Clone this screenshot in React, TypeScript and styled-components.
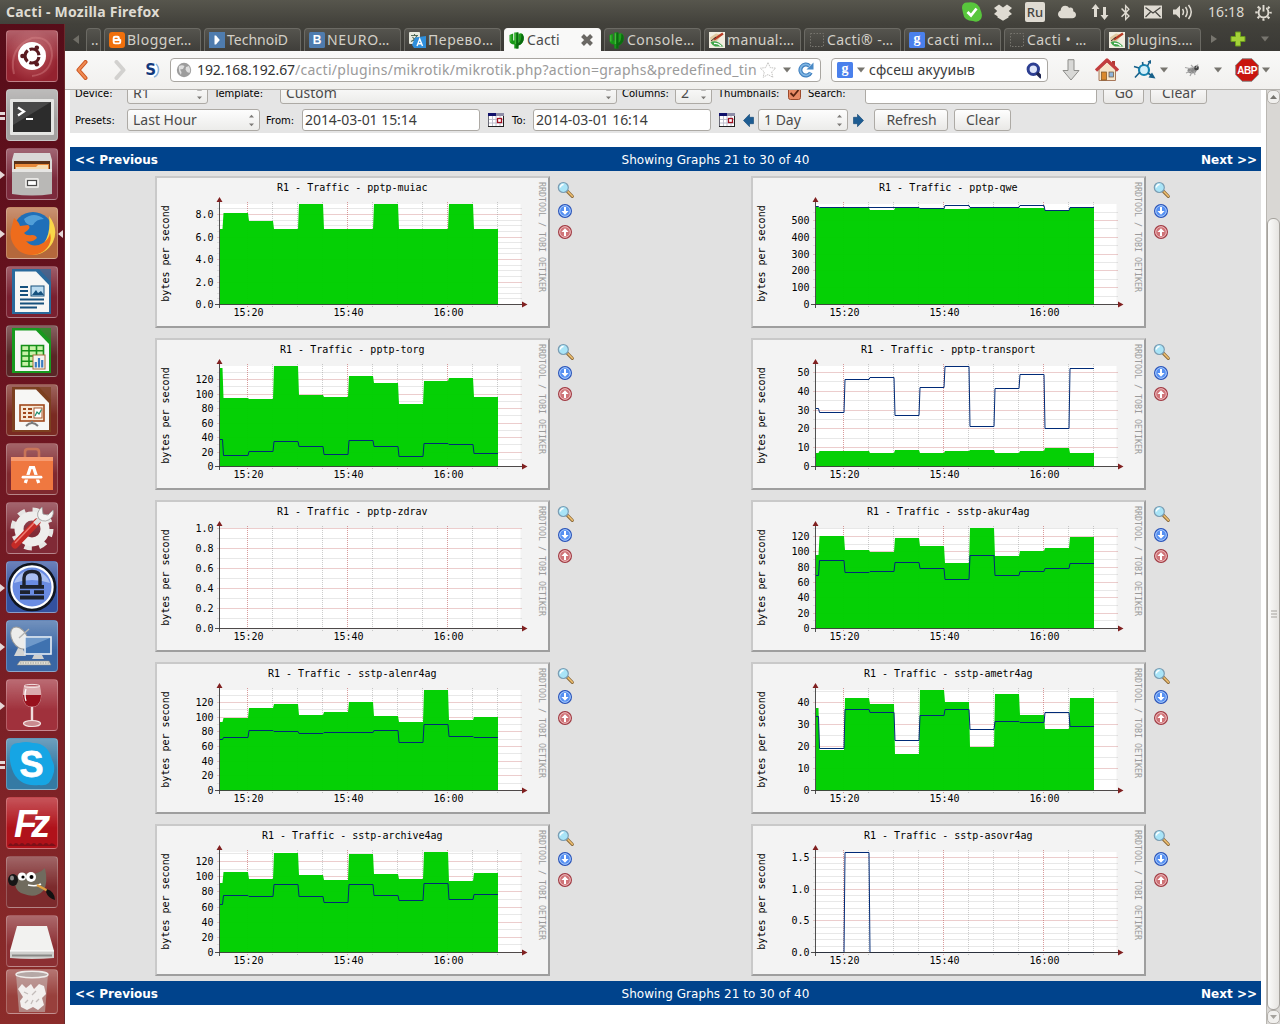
import React from "react";
import styled, { createGlobalStyle } from "styled-components";
import { FaCloud, FaBluetoothB } from "react-icons/fa";

const GlobalStyle = createGlobalStyle`
  * { box-sizing: border-box; }
  html, body { margin: 0; padding: 0; overflow: hidden; }
  body { background: #fff; font-family: "Noto Sans", sans-serif; color: #3c3c3c; }
  svg { display: block; flex: none; }
`;

const ui = `"Noto Sans", "Open Sans", sans-serif`;
const page = `"DejaVu Sans", sans-serif`;
const mono = `"DejaVu Sans Mono", monospace`;

/* ---------- desktop ---------- */

const Desktop = styled.div`
  width: 1280px;
  height: 1024px;
  display: flex;
  flex-direction: column;
  overflow: hidden;
`;

const TopPanel = styled.header`
  height: 24px;
  flex: none;
  display: flex;
  align-items: center;
  justify-content: space-between;
  padding: 0 8px 0 6px;
  background: linear-gradient(#57564d, #42413b);
  color: #dfdbd2;
`;

const WindowTitle = styled.span`
  font: bold 14px/24px ${ui};
  letter-spacing: 0.24px;
  white-space: nowrap;
`;

const Tray = styled.div`
  display: flex;
  align-items: center;
  height: 24px;
`;

const TrayItem = styled.span<{ w: number }>`
  width: ${(p) => p.w}px;
  flex: none;
  display: flex;
  align-items: center;
  justify-content: center;
`;

const Layout = styled.span`
  width: 20px;
  height: 20px;
  border-radius: 2px;
  background: #dfdbd2;
  color: #45443f;
  font: 500 13px/20px ${ui};
  text-align: center;
`;

const Clock = styled.span`
  width: 57px;
  padding-left: 10px;
  font: 14px/24px ${ui};
  letter-spacing: 0.1px;
`;

const Workspace = styled.div`
  flex: 1;
  display: flex;
  min-height: 0;
`;

/* ---------- launcher ---------- */

const Launcher = styled.nav`
  width: 65px;
  flex: none;
  padding: 6px 0 0 6px;
  display: flex;
  flex-direction: column;
  gap: 7px;
  background: linear-gradient(#570d19, #6a1420 35%, #7b2026 70%, #8b2c2a);
  border-right: 1px solid #6b2a2c;
`;

const Tile = styled.div<{ bg: string; short?: boolean }>`
  position: relative;
  width: 52px;
  height: ${(p) => (p.short ? 45 : 52)}px;
  margin-top: ${(p) => (p.short ? -5 : 0)}px;
  flex: none;
  border-radius: 4px;
  border: 1px solid rgba(255, 255, 255, 0.22);
  background: linear-gradient(rgba(255, 255, 255, 0.28), rgba(255, 255, 255, 0) 60%), ${(p) => p.bg};
  & > svg { margin: -1px; }
`;

const Pip = styled.i<{ kind: "one" | "two" | "active" }>`
  position: absolute;
  left: ${(p) => (p.kind === "active" ? "auto" : "-7px")};
  right: ${(p) => (p.kind === "active" ? "-6px" : "auto")};
  top: 22px;
  width: 5px;
  height: 8px;
  background: ${(p) => (p.kind === "two" ? "linear-gradient(#e6d8d8 3px, transparent 3px 5px, #e6d8d8 5px)" : "#e6d8d8")};
  clip-path: ${(p) =>
    p.kind === "one" ? "polygon(0 0, 100% 50%, 0 100%)" : p.kind === "active" ? "polygon(100% 0, 0 50%, 100% 100%)" : "none"};
`;

/* ---------- firefox ---------- */

const Browser = styled.main`
  flex: 1;
  min-width: 0;
  display: flex;
  flex-direction: column;
`;

const TabStrip = styled.div`
  height: 27px;
  flex: none;
  display: flex;
  align-items: flex-end;
  background: linear-gradient(#42413b, #3a3935);
`;

const TabArrow = styled.span<{ w: number }>`
  width: ${(p) => p.w}px;
  height: 24px;
  display: flex;
  align-items: center;
  justify-content: center;
`;

const Tab = styled.div<{ active?: boolean; w?: number }>`
  width: ${(p) => p.w ?? 97}px;
  height: 23px;
  margin-right: 3px;
  padding: 0 2px 0 4px;
  flex: none;
  display: flex;
  align-items: center;
  gap: 2px;
  border-radius: 4px 4px 0 0;
  border: 1px solid ${(p) => (p.active ? "#f7f6f5" : "#6b6a64")};
  border-bottom: 0;
  background: ${(p) => (p.active ? "#f9f9f8" : "linear-gradient(#55544e, #3f3e3a)")};
  color: ${(p) => (p.active ? "#4b4b4b" : "#d3d0c8")};
  font: 14px/22px ${ui};
  white-space: nowrap;
`;

const TabText = styled.span<{ ls?: number }>`
  flex: 1;
  letter-spacing: ${(p) => p.ls ?? 0}px;
`;

const Toolbar = styled.div`
  height: 39px;
  flex: none;
  display: flex;
  align-items: center;
  background: linear-gradient(#f9f9f8, #f1f0ee);
  border-bottom: 1px solid #b5b3af;
`;

const Field = styled.div<{ w: number; ml: number }>`
  width: ${(p) => p.w}px;
  height: 24px;
  margin-left: ${(p) => p.ml}px;
  padding: 0 6px 0 5px;
  flex: none;
  display: flex;
  align-items: center;
  border: 1px solid #a9a6a1;
  border-radius: 4px;
  background: #fff;
  font: 14px/22px ${ui};
  white-space: nowrap;
`;

const Url = styled.span`
  flex: 1;
  min-width: 0;
  margin-left: 5px;
  color: #9a9a9a;
  letter-spacing: 0.28px;
  b { font-weight: 400; color: #333; letter-spacing: -0.1px; }
`;

const Query = styled.span`
  flex: 1;
  margin-left: 4px;
  color: #3c3c3c;
  letter-spacing: 0.12px;
`;

const ToolIcon = styled.span<{ ml: number }>`
  margin-left: ${(p) => p.ml}px;
`;

const Viewport = styled.div`
  flex: 1;
  min-height: 0;
  display: flex;
  background: #fff;
  overflow: hidden;
`;

const Page = styled.div`
  width: 1196px;
  flex: none;
  padding-left: 5px;
  display: flex;
  flex-direction: column;
`;

/* ---------- filter form ---------- */

const Filter = styled.form`
  height: 43px;
  flex: none;
  margin-bottom: 14px;
  display: flex;
  flex-direction: column;
  justify-content: flex-end;
  overflow: hidden;
  background: #e5e5e5;
  padding-bottom: 2px;
`;

const FilterRow = styled.div`
  height: 22px;
  flex: none;
  display: flex;
  align-items: center;
  padding-left: 5px;
  & + & { margin-top: 5px; }
`;

const Label = styled.label<{ w: number }>`
  width: ${(p) => p.w}px;
  flex: none;
  padding-top: 1px;
  font: 10px/22px ${page};
  color: #000;
  white-space: nowrap;
`;

const Box = styled.div<{ w: number; mr?: number }>`
  width: ${(p) => p.w}px;
  height: 22px;
  flex: none;
  margin-right: ${(p) => p.mr ?? 6}px;
  padding: 0 4px 0 5px;
  display: flex;
  align-items: center;
  justify-content: space-between;
  border: 1px solid #adaaa5;
  border-radius: 3px;
  font: 14px/20px ${ui};
  color: #4b4b4b;
  white-space: nowrap;
`;

const Select = styled(Box)`
  background: linear-gradient(#fdfdfd, #ececea);
`;

const Input = styled(Box)`
  background: #fff;
  color: #3c3c3c;
  padding-left: 2px;
  letter-spacing: -0.05px;
`;

const Button = styled(Box)`
  justify-content: center;
  background: linear-gradient(#fefefe, #e9e8e6);
`;

const Glyph = styled.span<{ w: number }>`
  width: ${(p) => p.w}px;
  flex: none;
`;

/* ---------- graphs ---------- */

const NavBar = styled.div`
  height: 24px;
  flex: none;
  display: grid;
  grid-template-columns: 180px 1fr 81px;
  align-items: center;
  padding: 1px 4px 0 5px;
  background: #00438c;
  color: #fff;
  font: 12px/24px ${page};
  text-align: center;
  white-space: nowrap;
  span { letter-spacing: 0.06px; }
  b:first-child { text-align: left; }
  b:last-child { text-align: right; }
`;

const GraphGrid = styled.div`
  height: 810px;
  flex: none;
  display: grid;
  grid-template-columns: 596px 595px;
  grid-auto-rows: 162px;
  background: #e1e1e1;
`;

const Cell = styled.div`
  padding: 5px 0 0 85px;
  display: flex;
`;

const GraphLinks = styled.div`
  margin: 5px 0 0 7px;
  display: flex;
  flex-direction: column;
  gap: 3px;
`;

const ScrollBar = styled.div`
  width: 14px;
  margin-left: 5px;
  flex: none;
  display: flex;
  flex-direction: column;
  background: #d9d7d4;
  border-left: 1px solid #bab7b2;
`;

const ScrollButton = styled.div`
  height: 14px;
  flex: none;
  display: flex;
  align-items: center;
  justify-content: center;
  border: 1px solid #b4b1ac;
  border-radius: 5px;
  background: #f1f0ee;
`;

const ScrollThumb = styled.div`
  margin-top: 114px;
  height: 793px;
  display: flex;
  align-items: center;
  justify-content: center;
  border: 1px solid #a5a29d;
  border-radius: 6px;
  background: linear-gradient(90deg, #fbfbfa, #e6e4e1);
`;

type Graph = {
  name: string;
  max: number;
  step: number;
  minor: number;
  digits?: number;
  area?: number[];
  line?: number[];
};

const graphs: Graph[] = [
  {
    name: "pptp-muiac", max: 8.92, step: 2, minor: 0.5, digits: 1,
    area: [6.7, 8.12, 7.4, 6.7, 8.92, 6.7, 6.7, 8.92, 6.7, 6.7, 8.92, 6.7],
  },
  {
    name: "pptp-qwe", max: 597, step: 100, minor: 50,
    area: [578, 572, 572, 561, 572, 572, 566, 572, 572, 572, 560, 577],
    line: [586, 578, 578, 575, 576, 574, 592, 576, 576, 592, 560, 580],
  },
  {
    name: "pptp-torg", max: 138.4, step: 20, minor: 10,
    area: [135.6, 94.3, 93, 138.4, 99.3, 95.6, 124.6, 115, 86, 117.7, 121.8, 95.6],
    line: [37, 15, 20.7, 34.5, 27.6, 16.5, 36, 27.6, 13.8, 31.7, 30.3, 18],
  },
  {
    name: "pptp-transport", max: 53.3, step: 10, minor: 5,
    area: [7.2, 8, 8, 7.4, 9, 7, 8, 9, 7, 8, 9.6, 7],
    line: [30.8, 28.7, 46.3, 47.3, 27.1, 42, 53.2, 21.3, 41.5, 48.9, 20.2, 52.1],
  },
  { name: "pptp-zdrav", max: 1, step: 0.2, minor: 0.1, digits: 1 },
  {
    name: "sstp-akur4ag", max: 131, step: 20, minor: 10,
    area: [95.6, 120.4, 102.2, 99.6, 117.8, 107.4, 85.2, 130.9, 94.3, 100.9, 104.8, 119.1],
    line: [69.1, 88.7, 73, 74.3, 86, 78.3, 63.9, 95.2, 69.1, 74.3, 78.3, 84.8],
  },
  {
    name: "sstp-alenr4ag", max: 136.8, step: 20, minor: 10,
    area: [93.2, 98.6, 112.3, 117.7, 102.7, 106.8, 120.5, 101.4, 93.2, 136.8, 95.9, 100],
    line: [69.5, 72.3, 81.8, 80.5, 77.7, 79, 79, 81.8, 65.5, 90, 73.6, 72.3],
  },
  {
    name: "sstp-ametr4ag", max: 45.6, step: 10, minor: 5,
    area: [37.4, 18.3, 42, 39.2, 16.5, 45.6, 40.2, 19.7, 43.8, 34.2, 27.9, 42],
    line: [33.6, 19.1, 36.8, 35.5, 22.7, 34.1, 36.8, 27.7, 31.4, 30.9, 35.5, 29.1],
  },
  {
    name: "sstp-archive4ag", max: 132.3, step: 20, minor: 10,
    area: [91.4, 105.9, 96.7, 131, 102, 95.4, 129.7, 103.3, 96.7, 132.3, 94, 104.6],
    line: [63.3, 75.2, 73.8, 89.7, 73.8, 65.9, 89.7, 75.2, 68.6, 91, 69.9, 76.5],
  },
  {
    name: "sstp-asovr4ag", max: 1.58, step: 0.5, minor: 0.1, digits: 1,
    line: [0, 0, 1.57, 0, 0, 0, 0, 0, 0, 0, 0, 0],
  },
];

// x of every 5 minute boundary, the first slot is cut by the axis
const slots = [65, 67.5, 93, 118, 143, 168, 193, 218, 243, 268, 293, 318, 343];
const LEFT = 64.5;
const BASE = 128.5;
const PLOT = 100.3;

const RrdGraph = ({ name, max, step, minor, digits = 0, area, line }: Graph) => {
  const toY = (v: number) => BASE - (v / max) * PLOT;
  const trace = (vals: number[], snap: boolean) =>
    vals
      .map((v, i) => {
        const y = snap ? Math.floor(toY(v)) + 0.5 : Math.round(toY(v));
        return `${slots[i] + (i ? 1 : 0)},${y} ${slots[i + 1]},${y}`;
      })
      .join(" ");
  const rows = Array.from({ length: Math.floor(max / minor + 0.01) + 1 }, (_, i) => i * minor);
  const isMajor = (v: number) => Math.abs(v / step - Math.round(v / step)) < 0.01;

  return (
    <svg width="395" height="152" viewBox="0 0 395 152" fontFamily={mono} fontSize="10" fill="#000">
      <rect width="395" height="152" fill="#9e9e9e" />
      <path d="M0 0H395L393 2H2V150L0 152Z" fill="#c9c9c9" />
      <rect x="2" y="2" width="391" height="148" fill="#f3f3f3" />
      <rect x={LEFT} y="28" width="301" height="100.5" fill="#fff" />
      {rows.map((v) => (
        <line
          key={v}
          x1="62.5"
          x2="367"
          y1={Math.floor(toY(v)) + 0.5}
          y2={Math.floor(toY(v)) + 0.5}
          stroke={isMajor(v) ? "#c87070" : "#8f8f8f"}
          strokeOpacity={isMajor(v) ? 0.7 : 0.42}
          strokeDasharray="1 1"
        />
      ))}
      {slots.slice(2).map((x, i) => (
        <line
          key={x}
          x1={x - 0.5}
          x2={x - 0.5}
          y1="26"
          y2="131"
          stroke={i % 4 === 0 ? "#c87070" : "#8f8f8f"}
          strokeOpacity={i % 4 === 0 ? 0.7 : 0.45}
          strokeDasharray="1 1"
        />
      ))}
      {/* a trace of the grid stays visible through the area */}
      {area && <polygon points={`65,128.5 ${trace(area, false)} 343,128.5`} fill="#00cf00" fillOpacity="0.98" />}
      {line && <polyline points={trace(line, true)} fill="none" stroke="#002a77" strokeWidth="1" />}
      <path d="M60 128.5H369M64.5 25V132" stroke="#333" strokeWidth="1" fill="none" opacity="0.85" />
      <path d="M61.5 26L64.5 21L67.5 26ZM367 125.5V131.5L372.5 128.5Z" fill="#802020" />
      <text x="197.3" y="15" textAnchor="middle">
        {`R1 - Traffic - ${name}`}
      </text>
      {rows.filter(isMajor).map((v) => (
        <text key={v} x="58.5" y={toY(v) + 3.5} textAnchor="end">
          {v.toFixed(digits)}
        </text>
      ))}
      {["15:20", "15:40", "16:00"].map((t, i) => (
        <text key={t} x={93.5 + i * 100} y="140" textAnchor="middle">
          {t}
        </text>
      ))}
      <text transform="translate(14 77.5) rotate(-90)" textAnchor="middle">
        bytes per second
      </text>
      <text transform="translate(384 6) rotate(90)" fontSize="8.3" fill="#9a9a9a">
        RRDTOOL / TOBI OETIKER
      </text>
    </svg>
  );
};

const ZoomIcon = () => (
  <svg width="18" height="18" viewBox="0 0 18 18">
    <path d="M10.5 10.5L15.3 15.3" stroke="#8a6a3c" strokeWidth="3.2" strokeLinecap="round" />
    <path d="M11 10.8L15.4 15.2" stroke="#f0c070" strokeWidth="1.6" strokeLinecap="round" />
    <circle cx="6.3" cy="6.5" r="5" fill="#a9e4f7" stroke="#7a9cb2" strokeWidth="1.2" />
    <path d="M3.4 6.4A3 3 0 0 1 6.6 3.4" stroke="#fff" strokeWidth="1.5" fill="none" />
  </svg>
);

const ArrowIcon = ({ up }: { up?: boolean }) => (
  <svg width="16" height="18" viewBox="0 0 16 18">
    <circle cx="8" cy="9" r="6.4" fill={up ? "#cf7478" : "#5690f2"} stroke={up ? "#a03c44" : "#2c55b8"} strokeWidth="1.2" />
    <circle cx="8" cy="9" r="5.3" fill="none" stroke={up ? "#f0c4c6" : "#b4d2fc"} strokeWidth="0.9" />
    <path
      d="M7 5H9V9H11.6L8 12.8L4.4 9H7Z"
      fill="#fff"
      transform={up ? "rotate(180 8 9)" : undefined}
    />
  </svg>
);

const Spin = () => (
  <svg width="7" height="13" viewBox="0 0 7 13">
    <path d="M1 3.5L3.5 0.8L6 3.5ZM1 9.5L3.5 12.2L6 9.5Z" fill="#7d7b78" />
  </svg>
);

const Caret = ({ color = "#77756f" }: { color?: string }) => (
  <svg width="8" height="6" viewBox="0 0 8 6">
    <path d="M0 0.5H8L4 5.5Z" fill={color} />
  </svg>
);

const Calendar = () => (
  <svg width="16" height="14" viewBox="0 0 16 14">
    <rect x="0.5" y="0.5" width="15" height="13" fill="#fff" stroke="#6b6b78" />
    <rect x="0" y="0" width="8" height="3" fill="#10106a" />
    <rect x="8" y="0" width="8" height="3" fill="#8d8da6" />
    <path d="M4.5 3V13M8 3V13M12 3V13M1 6.5H15M1 10H15" stroke="#b9b9c8" strokeWidth="0.9" />
    <rect x="9.5" y="5.5" width="4" height="4" fill="#fff" stroke="#a01020" strokeWidth="1.3" />
    <path d="M0 13.5H16M15.5 3V14" stroke="#222" />
  </svg>
);

const Shift = ({ right }: { right?: boolean }) => (
  <svg width="11" height="13" viewBox="0 0 11 13">
    <path
      d="M0.5 6.5L6.5 0.3V3.3H10.5V9.7H6.5V12.7Z"
      fill="#1d5c92"
      stroke="#0f4474"
      strokeWidth="0.6"
      transform={right ? "rotate(180 5.5 6.5)" : undefined}
    />
  </svg>
);

/* ---------- favicons ---------- */

const Badge = ({ color, text, serif }: { color: string; text: string; serif?: boolean }) => (
  <svg width="16" height="16" viewBox="0 0 16 16">
    <rect width="16" height="16" rx="1.5" fill={color} />
    <text
      x="8"
      y={serif ? 11.3 : 12.3}
      textAnchor="middle"
      fontFamily={serif ? "Liberation Serif, serif" : "Liberation Sans, sans-serif"}
      fontWeight="bold"
      fontSize={serif ? 14 : 12}
      fill="#fff"
    >
      {text}
    </text>
  </svg>
);

const BloggerIcon = () => (
  <svg width="16" height="16" viewBox="0 0 16 16">
    <rect width="16" height="16" rx="3" fill="#f0700c" />
    <path d="M6 3.8H8.6A2.2 2.2 0 0 1 10.8 6V6.6Q11 7.3 12.2 7.4V10A2.3 2.3 0 0 1 9.9 12.3H6A2.3 2.3 0 0 1 3.7 10V6A2.3 2.3 0 0 1 6 3.8Z" fill="#fff" />
    <path d="M6.2 6.4H8M6.2 9.8H9.8" stroke="#f0700c" strokeWidth="1.4" strokeLinecap="round" />
  </svg>
);

const PlayIcon = () => (
  <svg width="16" height="16" viewBox="0 0 16 16">
    <rect width="16" height="16" fill="#4f7cae" />
    <path d="M5.5 3.5H7L10.8 8L7 12.5H5.5Z" fill="#fff" />
  </svg>
);

const TranslateIcon = () => (
  <svg width="17" height="17" viewBox="0 0 17 17">
    <rect width="11" height="12" rx="1" fill="#e8eadf" />
    <path d="M2 3.5H9M5.5 2V3.5M8 3.5Q6 8 2 9.5M3.5 5Q5.5 8 8.5 9.5" stroke="#506a58" strokeWidth="1.1" fill="none" />
    <path d="M6 5.5L17 4V16H5L3 13Z" fill="#2f8fdc" />
    <path d="M8 14L10.7 7L13.5 14M9 11.8H12.5" stroke="#fff" strokeWidth="1.4" fill="none" />
  </svg>
);

const CactusIcon = () => (
  <svg width="16" height="17" viewBox="0 0 16 17">
    <path d="M0.5 3L4.2 1.5V8.5H5.3V0.5H9.4V16.5H5.3V12.6Q1 12.4 0.5 9Z" fill="#169616" />
    <path d="M9.4 9.2V2.4Q11.5 0.4 13.8 2.2Q15.2 4 14.6 8Q13.4 12.3 9.4 13.6Z" fill="#1ea01a" />
    <path d="M12.3 1.8Q15.4 3 14.6 8Q13.4 12.3 9.4 13.6V11Q12.8 9 12.3 1.8ZM7.6 0.5H9.4V16.5H7.2Z" fill="#0b6a10" />
    <path d="M1.8 3.2V9.5M6.3 1.3V12" stroke="#56c848" strokeWidth="0.9" />
  </svg>
);

const ManualIcon = () => (
  <svg width="16" height="16" viewBox="0 0 16 16">
    <rect width="16" height="16" fill="#f1ede0" />
    <path d="M1 5.5L7 1.5L13 3L8 9L2 10Z" fill="#dfc9a0" />
    <path d="M5 7.5L14 1.5" stroke="#b83a24" strokeWidth="2.2" />
    <path d="M2 9L7 5" stroke="#3d3a34" strokeWidth="1" />
    <path d="M1.5 10.5Q7 6.5 14.5 14.5H6Q3 13 1.5 10.5Z" fill="#3fa648" />
    <path d="M5 11.5Q9 11 12 14" stroke="#fff" strokeWidth="1.3" fill="none" />
  </svg>
);

const BlankIcon = () => (
  <svg width="16" height="16" viewBox="0 0 16 16">
    <rect x="1.5" y="1.5" width="13" height="13" fill="none" stroke="#77756e" strokeDasharray="1.5 1.5" />
  </svg>
);

const google = <Badge color="#4a80ec" text="g" serif />;

const tabs: { icon: React.ReactNode; text: string; active?: boolean; ls?: number }[] = [
  { icon: <BloggerIcon />, text: "Blogger…", ls: 0.5 },
  { icon: <PlayIcon />, text: "TechnoiD", ls: 0 },
  { icon: <Badge color="#4f7cae" text="B" />, text: "NEURO…", ls: 0.7 },
  { icon: <TranslateIcon />, text: "Перево…", ls: 0.6 },
  { icon: <CactusIcon />, text: "Cacti", active: true, ls: 0.15 },
  { icon: <CactusIcon />, text: "Console…", ls: 0.5 },
  { icon: <ManualIcon />, text: "manual:…", ls: 0.35 },
  { icon: <BlankIcon />, text: "Cacti® -…", ls: 0.4 },
  { icon: google, text: "cacti mi…", ls: 0.55 },
  { icon: <BlankIcon />, text: "Cacti • …", ls: 0.45 },
  { icon: <ManualIcon />, text: "plugins.…", ls: 0.3 },
];

/* ---------- launcher icons, all on a 52px canvas ---------- */

const Sheet = ({ color, children }: { color: string; children: React.ReactNode }) => (
  <>
    <path d="M6 3H33L45 16V48H6Z" fill={color} />
    <path d="M9 5.5H30L43 19V46H9Z" fill="#f7f7f5" />
    <path d="M31 3L45 17V3Z" fill={color} opacity="0.7" />
    {children}
  </>
);

const launcherItems: { bg: string; pip?: "one" | "two"; active?: boolean; short?: boolean; art: React.ReactNode }[] = [
  {
    bg: "radial-gradient(#c05a60, #94222f 75%)",
    art: (
      <>
        <path d="M8 44Q2 18 26 8Q46 6 46 26Q44 44 26 46" stroke="#d98a8c" strokeWidth="2" fill="none" opacity="0.4" />
        <circle cx="26" cy="26" r="14" fill="#fff" />
        <circle cx="26" cy="26" r="7" fill="none" stroke="#5a1a20" strokeWidth="3.2" strokeDasharray="12.6 2.06" strokeDashoffset="-1" />
        <circle cx="16.5" cy="26" r="2.3" fill="#5a1a20" />
        <circle cx="30.8" cy="17.8" r="2.3" fill="#5a1a20" />
        <circle cx="30.8" cy="34.2" r="2.3" fill="#5a1a20" />
      </>
    ),
  },
  {
    bg: "#a3a1a0",
    pip: "two",
    art: (
      <>
        <rect x="4" y="10" width="44" height="36" rx="1" fill="#e5e5e3" />
        <rect x="7" y="13" width="38" height="30" fill="#2c2c2c" />
        <path d="M7 13H45L7 36Z" fill="#fff" opacity="0.13" />
        <path d="M12 18.5L18 22.5L12 26.5M20 30H27" stroke="#fff" strokeWidth="2.2" fill="none" />
      </>
    ),
  },
  {
    bg: "#7c2a3c",
    pip: "one",
    art: (
      <>
        <path d="M8 5H44L46 12V24H6V12Z" fill="#d9d8d6" />
        <rect x="8" y="13" width="36" height="10" fill="#5b3218" />
        <path d="M9 23V16H43V23" fill="#e88a3a" />
        <path d="M10 19H30L32 17H42V23H10Z" fill="#f6dcb0" />
        <path d="M6 21H46V46Q26 49 6 46Z" fill="#b9b8b6" />
        <path d="M6 21H46V24H6Z" fill="#e6e5e3" />
        <rect x="19" y="30" width="14" height="10" rx="1.5" fill="#e9e8e6" />
        <rect x="21.5" y="32.5" width="9" height="5" fill="#fff" stroke="#4a4a4a" strokeWidth="1.2" />
      </>
    ),
  },
  {
    bg: "#b4683c",
    pip: "one",
    active: true,
    art: (
      <>
        <circle cx="27" cy="25" r="20" fill="#1f6fb8" />
        <path d="M18 12Q28 4 38 12Q30 12 27 18Q20 19 18 12Z" fill="#66b4e6" opacity="0.7" />
        <path d="M43 9Q53 22 47 35Q40 48 25 48Q30 40 38 36Q45 26 43 9Z" fill="#f9d648" />
        <path d="M8 11Q13 15 14 19L22 18Q25 20 22 23L18 26Q20 29 26 28Q30 28 31 31Q26 36 20 34Q27 42 37 36Q43 32 44 26Q47 36 38 44Q26 52 13 44Q1 33 6 19Z" fill="#ee6c1c" />
      </>
    ),
  },
  {
    bg: "#7a2030",
    art: (
      <Sheet color="#2a6a9c">
        <path d="M14 21H22M14 25H22M14 29H22M14 33.5H38M14 37.5H38M14 41.5H31" stroke="#16517d" strokeWidth="1.8" />
        <rect x="25" y="20" width="13" height="10" fill="#bcdcf0" stroke="#16517d" />
        <path d="M26 29L30 24L32 27L35 25L38 29Z" fill="#16517d" />
      </Sheet>
    ),
  },
  {
    bg: "#5a2526",
    art: (
      <Sheet color="#189a1e">
        <path d="M15.5 20.5H37.5V41.5H15.5ZM15.5 25.8H37.5M15.5 31H37.5M15.5 36.3H37.5M23 20.5V41.5M30.5 20.5V41.5" stroke="#159018" strokeWidth="1.6" fill="#c8f2a8" />
        <rect x="27" y="30" width="12" height="14" fill="#f6f3ee" stroke="#a86b3a" />
        <path d="M29.8 42.5V37M33 42.5V33M36.2 42.5V35" stroke="#3c7cc0" strokeWidth="2.2" />
      </Sheet>
    ),
  },
  {
    bg: "#7a2a22",
    art: (
      <Sheet color="#7c4020">
        <rect x="14" y="21" width="24" height="16" fill="#f6e8d6" stroke="#a0481c" strokeWidth="1.6" />
        <path d="M17 25H20M17 29H20M17 33H20M22 25H26M22 29H26M22 33H26" stroke="#a0481c" strokeWidth="2" />
        <rect x="28" y="24" width="8" height="10" fill="#fff" stroke="#a0481c" strokeWidth="0.9" />
        <path d="M29 32L31 28L33 30L35.5 25.5" stroke="#1e8f6e" strokeWidth="1.2" fill="none" />
        <path d="M20 42Q26 36 32 42M26 37V40" stroke="#7a7a7a" strokeWidth="2" fill="none" />
      </Sheet>
    ),
  },
  {
    bg: "#80292f",
    art: (
      <>
        <path d="M19 16V9Q19 6 22 6H30Q33 6 33 9V16" stroke="#c87458" strokeWidth="2.6" fill="none" />
        <path d="M5 14H47V47H5Z" fill="#ef7840" />
        <path d="M5 14H47V18H5Z" fill="#f69b70" />
        <path d="M19.3 40L24.4 24.5H27.6L32.7 40" stroke="#fff" strokeWidth="3.2" fill="none" />
        <path d="M17 34.2H35" stroke="#ef7840" strokeWidth="4.6" />
        <path d="M17 34.2H35" stroke="#fff" strokeWidth="2.8" strokeLinecap="round" />
      </>
    ),
  },
  {
    bg: "#802a36",
    art: (
      <>
        <circle cx="26" cy="27" r="19" fill="none" stroke="#e6e6e4" strokeWidth="5" strokeDasharray="7.5 7.42" />
        <circle cx="26" cy="27" r="13" fill="none" stroke="#eeeeec" strokeWidth="9" />
        <path d="M9 43L31 20" stroke="#c52a26" strokeWidth="7" strokeLinecap="round" />
        <path d="M9 41L29 20" stroke="#ee7a70" strokeWidth="1.6" />
        <path d="M29 22L35 16" stroke="#dededc" strokeWidth="5" />
        <path d="M36 5Q29 11 33 17Q40 22 46 15Q48 12 47 8L42 13L37 12Z" fill="#f4f4f2" stroke="#9b9b99" strokeWidth="0.8" />
      </>
    ),
  },
  {
    bg: "#33519f",
    pip: "one",
    art: (
      <>
        <circle cx="26" cy="26" r="23" fill="#fff" stroke="#10151f" strokeWidth="2.6" />
        <circle cx="26" cy="26" r="19.5" fill="#6a8ce2" />
        <path d="M8 22A19 19 0 0 1 44 22Q26 16 8 22Z" fill="#c4d4f8" opacity="0.7" />
        <path d="M18 26V17Q18 10.5 26 10.5Q34 10.5 34 17V26" stroke="#1d222c" strokeWidth="3.4" fill="none" />
        <path d="M14 24H38V27.8H14ZM14 29.3H24V33H14ZM28 29.3H38V33H28ZM14 34.5H38V38.5H14Z" fill="#1d222c" />
      </>
    ),
  },
  {
    bg: "#3a66a4",
    pip: "one",
    art: (
      <>
        <path d="M12 28L8 36H20L16 27Z" fill="#d5d5d3" />
        <ellipse cx="13.5" cy="18" rx="7.5" ry="12" transform="rotate(-30 13.5 18)" fill="#ededeb" stroke="#9a9a98" />
        <path d="M13 18L23 9" stroke="#b5b5b3" strokeWidth="1.4" />
        <rect x="19" y="17" width="26" height="17" fill="#3f72b0" stroke="#e8eef6" strokeWidth="1.6" />
        <path d="M20 18H44L20 28Z" fill="#8fb4dc" opacity="0.6" />
        <path d="M28 35H36L38 39H26Z" fill="#d0d0ce" />
        <path d="M14 41H43L45 45H11Z" fill="#e5e3da" stroke="#8a8a84" strokeWidth="0.6" />
        <path d="M14 43H43" stroke="#9b9b92" strokeDasharray="1.5 1" />
      </>
    ),
  },
  {
    bg: "#a0313c",
    pip: "one",
    art: (
      <>
        <path d="M18 7H34Q38 24 29 28H23Q14 24 18 7Z" fill="#e9c8c8" opacity="0.75" />
        <path d="M17 16H35Q35 25 29 27.5H23Q17 25 17 16Z" fill="#98101c" />
        <ellipse cx="26" cy="7" rx="8" ry="1.6" fill="none" stroke="#f2dede" />
        <path d="M26 28V43" stroke="#f0dcdc" strokeWidth="2.4" />
        <ellipse cx="26" cy="44.5" rx="8.5" ry="3" fill="#c98a8e" stroke="#f2e4e4" strokeWidth="1.2" />
        <path d="M20 10Q18 16 20 22" stroke="#fff" strokeWidth="1.3" fill="none" />
      </>
    ),
  },
  {
    bg: "#357aa4",
    pip: "two",
    art: (
      <>
        <path d="M4 15Q4 4 13 5Q20 3 27 5Q42 5 46 22Q50 29 47 37Q44 49 33 47Q12 49 6 31Q3 22 4 15Z" fill="#16a5e4" />
        <text x="25.5" y="38.5" textAnchor="middle" fontFamily="Liberation Sans, sans-serif" fontWeight="bold" fontSize="36" fill="#fff" stroke="#fff" strokeWidth="0.8">S</text>
      </>
    ),
  },
  {
    bg: "#b0121a",
    art: (
      <>
        <path d="M2 49Q4 44 7 48Q10 44 13 48Q16 44 19 48Q22 44 25 48Q28 44 31 48Q34 44 37 48Q40 44 43 48Q46 44 50 49" fill="#7c1018" />
        <text x="8" y="40" fontFamily="Liberation Sans, sans-serif" fontStyle="italic" fontWeight="bold" fontSize="38" letterSpacing="-6" fill="#fff">Fz</text>
      </>
    ),
  },
  {
    bg: "#7c2a2c",
    art: (
      <>
        <path d="M11 19Q18 16 22 18Q32 19 39 12Q42 26 38 34Q30 43 18 38Q10 36 9 28Z" fill="#706b5e" />
        <circle cx="16" cy="20.5" r="4" fill="#fff" />
        <circle cx="25" cy="21" r="5" fill="#fff" />
        <circle cx="17" cy="21" r="1.6" />
        <circle cx="25.5" cy="21" r="2" />
        <ellipse cx="7" cy="24" rx="5" ry="6" fill="#161616" />
        <ellipse cx="6" cy="22" rx="2" ry="2.5" fill="#8a8a88" />
        <path d="M22 29Q30 31 35 28" stroke="#fff" strokeWidth="1.6" fill="none" />
        <path d="M31 29L42 35" stroke="#e0a040" strokeWidth="2.4" />
        <path d="M41 33Q49 36 49 44Q42 42 40 36Z" fill="#111" />
      </>
    ),
  },
  {
    bg: "#8c2f33",
    art: (
      <>
        <path d="M11 11H41L48 36H4Z" fill="#f2f2f0" />
        <path d="M4 36H48V43Q26 45 4 43Z" fill="#cfcfcd" />
        <path d="M4 36H48" stroke="#fff" />
        <path d="M6 40.5H46" stroke="#8a8a88" strokeWidth="2" />
      </>
    ),
  },
  {
    bg: "#98403c",
    short: true,
    art: (
      <>
        <path d="M10 5H42L39 43H13Z" fill="#c9c0be" opacity="0.55" />
        <ellipse cx="26" cy="5.5" rx="16" ry="3.2" fill="#b5a8a6" stroke="#efecea" strokeWidth="1.4" />
        <path d="M12 20L16 15L20 19L25 15L28 20L33 15L38 17L40 25L36 29L38 36L32 41L27 38L21 41L15 38L14 32L17 28Z" fill="#f2efee" />
        <path d="M18 23L22 25M30 22L26 26M22 31L19 34M30 33L33 30M25 35L27 31" stroke="#c3bcba" strokeWidth="1.3" fill="none" />
      </>
    ),
  },
];

const Nav = () => (
  <NavBar>
    <b>&lt;&lt; Previous</b>
    <span>Showing Graphs 21 to 30 of 40</span>
    <b>Next &gt;&gt;</b>
  </NavBar>
);

const PanelTray = () => (
  <Tray>
    <TrayItem w={24}>
      <svg width="22" height="22" viewBox="0 0 22 22">
        <path d="M1 7Q1 1 7 1.5Q17 0 19.5 9Q22 14 20 18Q17 22 12 20Q3 20 2 12Z" fill="#58c63c" />
        <path d="M6.5 11L10 14.5L15.5 7.5" stroke="#fff" strokeWidth="2.8" fill="none" />
      </svg>
    </TrayItem>
    <TrayItem w={38}>
      <svg width="18" height="17" viewBox="0 0 18 17">
        <path d="M5 0.5L9 3.5L13 0.5L18 4L14.8 7L18 10L14.5 12.3V13.5L9 16.8L3.5 13.5V12.3L0 10L3.2 7L0 4Z" fill="#dfdbd2" />
      </svg>
    </TrayItem>
    <TrayItem w={26}><Layout>Ru</Layout></TrayItem>
    <TrayItem w={38}><FaCloud size={18} /></TrayItem>
    <TrayItem w={27}>
      <svg width="18" height="18" viewBox="0 0 18 18">
        <path d="M4.5 1L8.5 6H6V14H3V6H0.5ZM13.5 17L17.5 12H15V4H12V12H9.5Z" fill="#dfdbd2" />
      </svg>
    </TrayItem>
    <TrayItem w={24}><FaBluetoothB size={17} /></TrayItem>
    <TrayItem w={31}>
      <svg width="18" height="14" viewBox="0 0 18 14">
        <rect width="18" height="13" y="0.5" fill="#dfdbd2" />
        <path d="M1.5 2.5L9 8L16.5 2.5M1.5 12L6.5 7M16.5 12L11.5 7" stroke="#45443f" strokeWidth="1.2" fill="none" />
      </svg>
    </TrayItem>
    <TrayItem w={30}>
      <svg width="20" height="16" viewBox="0 0 20 16">
        <path d="M0 5.5H3L7 1.5V14.5L3 10.5H0Z" fill="#dfdbd2" />
        <path d="M9.5 5Q11.5 8 9.5 11M12.5 3Q16 8 12.5 13M15.5 1Q21 8 15.5 15" stroke="#dfdbd2" strokeWidth="1.5" fill="none" />
      </svg>
    </TrayItem>
    <Clock>16:18</Clock>
    <svg width="17" height="17" viewBox="0 0 18 18">
      <circle cx="9" cy="9" r="7.4" fill="none" stroke="#dfdbd2" strokeWidth="2.6" strokeDasharray="2.2 3.61" strokeDashoffset="1.1" />
      <circle cx="9" cy="9" r="5.2" fill="none" stroke="#dfdbd2" strokeWidth="2" />
      <rect x="6.4" y="0" width="5.2" height="8.5" fill="#4f4e46" />
      <path d="M9 1V8" stroke="#dfdbd2" strokeWidth="2" />
    </svg>
  </Tray>
);

const NavToolbar = () => (
  <Toolbar>
    <ToolIcon ml={11}>
      <svg width="12" height="20" viewBox="0 0 12 20">
        <path d="M9.5 2L2.5 10L9.5 18" stroke="#c9531f" strokeWidth="4" strokeLinecap="round" strokeLinejoin="round" fill="none" />
        <path d="M9.5 2L2.5 10L9.5 18" stroke="#f08a52" strokeWidth="2" strokeLinecap="round" strokeLinejoin="round" fill="none" />
      </svg>
    </ToolIcon>
    <ToolIcon ml={26}>
      <svg width="12" height="20" viewBox="0 0 12 20">
        <path d="M2.5 2L9.5 10L2.5 18" stroke="#d2d1cf" strokeWidth="4" strokeLinecap="round" strokeLinejoin="round" fill="none" />
      </svg>
    </ToolIcon>
    <ToolIcon ml={18}>
      <svg width="16" height="16" viewBox="0 0 16 16">
        <circle cx="8" cy="8" r="7.2" fill="#fff" />
        <path d="M12 2A8 8 0 0 1 10 15" stroke="#8fb4dc" strokeWidth="1.6" fill="none" />
        <text x="6.7" y="13.3" textAnchor="middle" fontFamily="DejaVu Sans, sans-serif" fontWeight="bold" fontSize="15" fill="#12397c">S</text>
      </svg>
    </ToolIcon>
    <Field w={651} ml={10}>
      <svg width="16" height="16" viewBox="0 0 16 16">
        <circle cx="8" cy="8" r="7.2" fill="#9d9d9d" />
        <path d="M3 4Q6 2.5 8.5 4L7 7L4 7.5L5.5 10L5 13Q2 9 3 4ZM10 5L13 4Q15 7.5 13.5 11L11 10L9.5 7.5Z" fill="#dedede" />
      </svg>
      <Url>
        <b>192.168.192.67</b>/cacti/plugins/mikrotik/mikrotik.php?action=graphs&amp;predefined_tin
      </Url>
      <svg width="18" height="18" viewBox="0 0 18 18">
        <path d="M9 1.5L11.3 6.6L16.7 7.2L12.7 10.9L13.8 16.3L9 13.5L4.2 16.3L5.3 10.9L1.3 7.2L6.7 6.6Z" fill="#fff" stroke="#c4c3c1" strokeWidth="1" strokeDasharray="1.5 0.8" />
      </svg>
      <ToolIcon ml={6}><Caret /></ToolIcon>
      <ToolIcon ml={7}>
        <svg width="16" height="16" viewBox="0 0 16 16">
          <path d="M12.8 10.6A5.5 5.5 0 1 1 11.5 3.9" stroke="#3f7fbe" strokeWidth="4" fill="none" />
          <path d="M12.6 10.6A5.5 5.5 0 1 1 11.5 3.9" stroke="#7fb6e4" strokeWidth="1.8" fill="none" />
          <path d="M15.5 0.5V7.5H8.5Z" fill="#4a8ac6" />
        </svg>
      </ToolIcon>
    </Field>
    <Field w={217} ml={10}>
      {google}
      <ToolIcon ml={4}><Caret /></ToolIcon>
      <Query>сфсеш акууиыв</Query>
      <svg width="18" height="17" viewBox="-3 0 18 17">
        <circle cx="7.3" cy="7.3" r="5.2" fill="#dfe6fa" stroke="#2d3f92" strokeWidth="3" />
        <path d="M11 11L15.5 15.5" stroke="#1d2450" strokeWidth="3.4" />
      </svg>
    </Field>
    <ToolIcon ml={14}>
      <svg width="18" height="22" viewBox="0 0 18 22">
        <path d="M6 0.7H12V11.5H17L9 21L1 11.5H6Z" fill="#d8d8d6" stroke="#8e8e8b" />
      </svg>
    </ToolIcon>
    <ToolIcon ml={15}>
      <svg width="24" height="24" viewBox="0 0 24 24">
        <path d="M4 11V22.5H20.5V11L12 4Z" fill="#f5e6cb" stroke="#a8785a" />
        <path d="M17 3H20V8H17Z" fill="#b33a34" />
        <path d="M1 12.5L12 2L23 12.5" stroke="#c23e3e" strokeWidth="3.2" fill="none" strokeLinejoin="round" />
        <rect x="6.5" y="14" width="5" height="8" fill="#d98a2c" stroke="#7a5020" strokeWidth="0.7" />
        <rect x="14" y="14" width="4.5" height="5" fill="#8fb4dc" stroke="#6d5030" strokeWidth="0.7" />
      </svg>
    </ToolIcon>
    <ToolIcon ml={14}>
      <svg width="23" height="20" viewBox="0 0 23 20">
        <circle cx="11" cy="10" r="5" fill="#d4f0fa" stroke="#1784b0" strokeWidth="2.2" />
        <path d="M14.5 6L17 1M7 12L2 17.5M6 8L1 6.5M15 13L19 16M10 5L9.5 2" stroke="#17608a" strokeWidth="1.6" />
        <path d="M22.5 18.5L15.5 17.5L19 12.5ZM14.5 1.5L18 0L18 4Z" fill="#17608a" />
      </svg>
    </ToolIcon>
    <ToolIcon ml={4}><Caret /></ToolIcon>
    <ToolIcon ml={16}>
      <svg width="17" height="14" viewBox="0 0 17 14">
        <ellipse cx="8" cy="7.5" rx="4.5" ry="3" fill="#8a8a8a" />
        <circle cx="12.5" cy="5" r="2.4" fill="#444" />
        <path d="M1 4.5L8 6M2 10L7 8M6 13L8 9M11 12L10 8M7 2L10 5M14 1.5L12 5" stroke="#a8a8a8" strokeWidth="1.2" />
      </svg>
    </ToolIcon>
    <ToolIcon ml={13}><Caret /></ToolIcon>
    <ToolIcon ml={13}>
      <svg width="24" height="24" viewBox="0 0 24 24">
        <path d="M7.2 0.7H16.8L23.3 7.2V16.8L16.8 23.3H7.2L0.7 16.8V7.2Z" fill="#c9150f" stroke="#8f8a88" />
        <text x="12" y="15.8" textAnchor="middle" fontFamily="Liberation Sans, sans-serif" fontWeight="bold" fontSize="10" letterSpacing="-0.5" fill="#fff">ABP</text>
      </svg>
    </ToolIcon>
    <ToolIcon ml={3}><Caret /></ToolIcon>
  </Toolbar>
);

const GraphFilter = () => (
  <Filter>
    <FilterRow>
      <Label w={52}>Device:</Label>
      <Select w={81}>R1<Spin /></Select>
      <Label w={66}>Template:</Label>
      <Select w={337} mr={5}>Custom<Spin /></Select>
      <Label w={53}>Columns:</Label>
      <Select w={37} mr={6}>2<Spin /></Select>
      <Label w={70}>Thumbnails:</Label>
      <Glyph w={20}>
        <svg width="13" height="13" viewBox="0 0 13 13">
          <rect x="0.5" y="0.5" width="12" height="12" rx="2" fill="#e88a66" stroke="#9b4a2c" />
          <path d="M2.5 6L5.5 9L10.5 3" stroke="#5a2412" strokeWidth="1.8" fill="none" />
        </svg>
      </Glyph>
      <Label w={57}>Search:</Label>
      <Input w={232} />
      <Button w={41}>Go</Button>
      <Button w={57}>Clear</Button>
    </FilterRow>
    <FilterRow>
      <Label w={52}>Presets:</Label>
      <Select w={133}>Last Hour<Spin /></Select>
      <Label w={36}>From:</Label>
      <Input w={178} mr={8}>2014-03-01 15:14</Input>
      <Glyph w={24}><Calendar /></Glyph>
      <Label w={21}>To:</Label>
      <Input w={178} mr={8}>2014-03-01 16:14</Input>
      <Glyph w={24}><Calendar /></Glyph>
      <Glyph w={15}><Shift /></Glyph>
      <Select w={90} mr={5}>1 Day<Spin /></Select>
      <Glyph w={21}><Shift right /></Glyph>
      <Button w={74}>Refresh</Button>
      <Button w={57}>Clear</Button>
    </FilterRow>
  </Filter>
);

const App = (): JSX.Element => (
  <Desktop>
    <GlobalStyle />
    <TopPanel>
      <WindowTitle>Cacti - Mozilla Firefox</WindowTitle>
      <PanelTray />
    </TopPanel>
    <Workspace>
      <Launcher>
        {launcherItems.map((item, i) => (
          <Tile key={i} bg={item.bg} short={item.short}>
            <svg width="52" height={item.short ? 45 : 52} viewBox={item.short ? "0 0 52 45" : "0 0 52 52"}>
              {item.art}
            </svg>
            {item.pip && <Pip kind={item.pip} />}
            {item.active && <Pip kind="active" />}
          </Tile>
        ))}
      </Launcher>
      <Browser>
        <TabStrip>
          <TabArrow w={21}>
            <svg width="6" height="9" viewBox="0 0 6 9"><path d="M6 0V9L0 4.5Z" fill="#6f6d66" /></svg>
          </TabArrow>
          <Tab w={15}><TabText>..</TabText></Tab>
          {tabs.map((t) => (
            <Tab key={t.text} active={t.active}>
              {t.icon}
              <TabText ls={t.ls}>{t.text}</TabText>
              {t.active && (
                <svg width="18" height="14" viewBox="0 0 18 14">
                  <path d="M2.5 2.5L11.5 11.5M11.5 2.5L2.5 11.5" stroke="#6a6864" strokeWidth="4" />
                </svg>
              )}
            </Tab>
          ))}
          <TabArrow w={20}>
            <svg width="6" height="8" viewBox="0 0 6 8"><path d="M0 0V8L6 4Z" fill="#77756e" /></svg>
          </TabArrow>
          <TabArrow w={27}>
            <svg width="16" height="16" viewBox="0 0 16 16">
              <path d="M5.5 1H10.5V5.5H15V10.5H10.5V15H5.5V10.5H1V5.5H5.5Z" fill="#a4d238" stroke="#6a9a1c" />
            </svg>
          </TabArrow>
          <TabArrow w={28}><Caret color="#77756e" /></TabArrow>
        </TabStrip>
        <NavToolbar />
        <Viewport>
          <Page>
            <GraphFilter />
            <Nav />
            <GraphGrid>
              {graphs.map((g) => (
                <Cell key={g.name}>
                  <RrdGraph {...g} />
                  <GraphLinks>
                    <ZoomIcon />
                    <ArrowIcon />
                    <ArrowIcon up />
                  </GraphLinks>
                </Cell>
              ))}
            </GraphGrid>
            <Nav />
          </Page>
          <ScrollBar>
            <ScrollButton>
              <svg width="7" height="4" viewBox="0 0 7 4"><path d="M0 4H7L3.5 0Z" fill="#77756f" /></svg>
            </ScrollButton>
            <ScrollThumb>
              <svg width="6" height="8" viewBox="0 0 6 8"><path d="M0 1H6M0 4H6M0 7H6" stroke="#a5a29d" /></svg>
            </ScrollThumb>
            <ScrollButton>
              <svg width="7" height="4" viewBox="0 0 7 4"><path d="M0 0H7L3.5 4Z" fill="#a5a29d" /></svg>
            </ScrollButton>
          </ScrollBar>
        </Viewport>
      </Browser>
    </Workspace>
  </Desktop>
);

export default App;
